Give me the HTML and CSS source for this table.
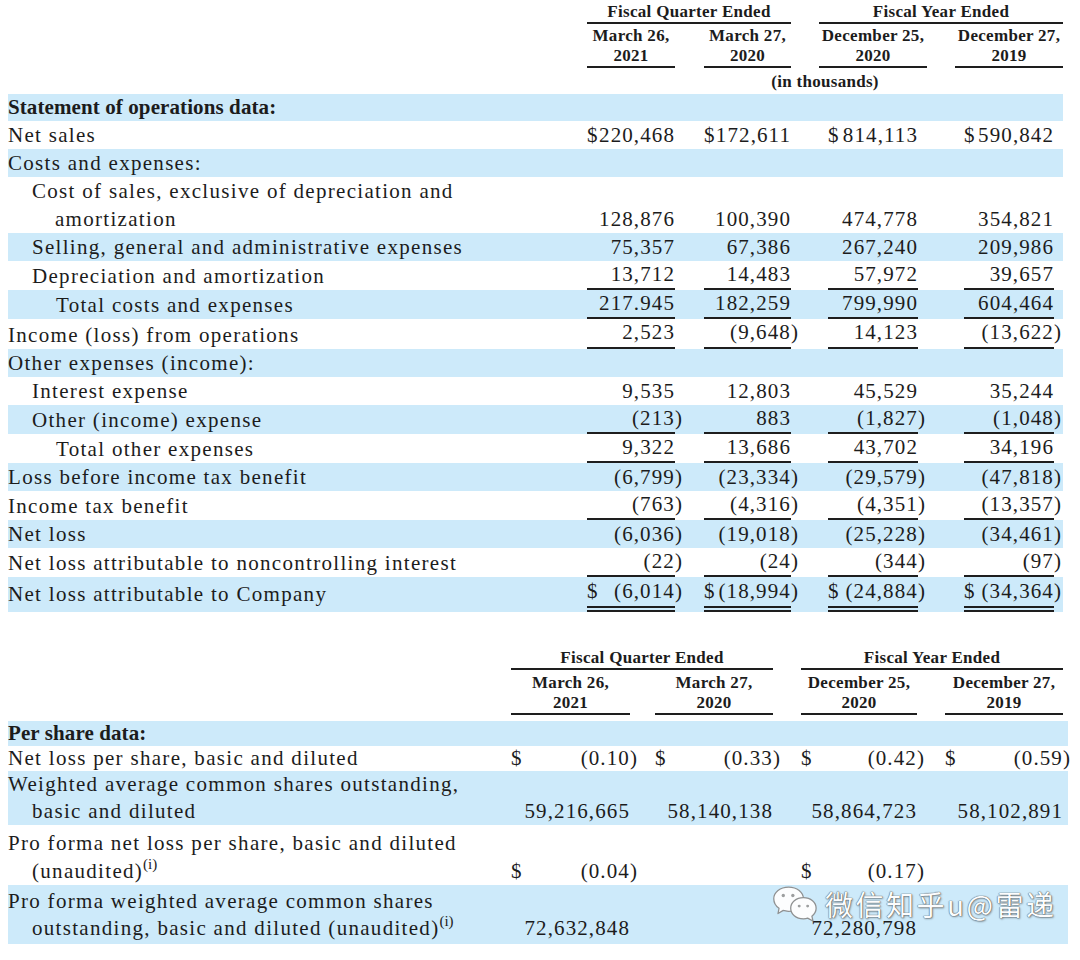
FILE: index.html
```html
<!DOCTYPE html>
<html lang="en">
<head>
<meta charset="utf-8">
<title>Selected financial data</title>
<link rel="stylesheet" href="styles.css">
</head>
<body>
<div class="page">
  <table class="fin t1">
    <colgroup><col class="cl"><col class="c1"><col class="c2"><col class="c3"><col class="c4"></colgroup>
    <thead>
      <tr class="hr1">
        <th></th>
        <th colspan="2" class="gq"><div class="hd">Fiscal Quarter Ended</div></th>
        <th colspan="2" class="gy"><div class="hd">Fiscal Year Ended</div></th>
      </tr>
      <tr class="hr2">
        <th></th>
        <th class="h1"><div class="hd">March 26,<br>2021</div></th>
        <th class="h2"><div class="hd">March 27,<br>2020</div></th>
        <th class="h3"><div class="hd">December 25,<br>2020</div></th>
        <th class="h4"><div class="hd">December 27,<br>2019</div></th>
      </tr>
      <tr class="hr3">
        <th></th>
        <th colspan="4">(in thousands)</th>
      </tr>
    </thead>
    <tbody>
      <tr class="first"><td class="lbl sec">Statement of operations data:</td><td></td><td class="v2"></td><td class="v3"></td><td class="v4"></td></tr>
      <tr><td class="lbl">Net sales</td>
        <td class="v1"><div class="n d"><span>$</span><span>220,468</span></div></td>
        <td class="v2"><div class="n d"><span>$</span><span>172,611</span></div></td>
        <td class="v3"><div class="n d"><span>$</span><span>814,113</span></div></td>
        <td class="v4"><div class="n d"><span>$</span><span>590,842</span></div></td></tr>
      <tr><td class="lbl">Costs and expenses:</td><td></td><td class="v2"></td><td class="v3"></td><td class="v4"></td></tr>
      <tr><td class="lbl w1">Cost of sales, exclusive of depreciation and<br>amortization</td>
        <td class="v1"><div class="n">128,876</div></td>
        <td class="v2"><div class="n">100,390</div></td>
        <td class="v3"><div class="n">474,778</div></td>
        <td class="v4"><div class="n">354,821</div></td></tr>
      <tr><td class="lbl i1">Selling, general and administrative expenses</td>
        <td class="v1"><div class="n">75,357</div></td>
        <td class="v2"><div class="n">67,386</div></td>
        <td class="v3"><div class="n">267,240</div></td>
        <td class="v4"><div class="n">209,986</div></td></tr>
      <tr><td class="lbl i1">Depreciation and amortization</td>
        <td class="v1"><div class="n u">13,712</div></td>
        <td class="v2"><div class="n u">14,483</div></td>
        <td class="v3"><div class="n u">57,972</div></td>
        <td class="v4"><div class="n u">39,657</div></td></tr>
      <tr><td class="lbl i2">Total costs and expenses</td>
        <td class="v1"><div class="n u">217.945</div></td>
        <td class="v2"><div class="n u">182,259</div></td>
        <td class="v3"><div class="n u">799,990</div></td>
        <td class="v4"><div class="n u">604,464</div></td></tr>
      <tr><td class="lbl">Income (loss) from operations</td>
        <td class="v1"><div class="n u">2,523</div></td>
        <td class="v2"><div class="n u">(9,648<span class="rp">)</span></div></td>
        <td class="v3"><div class="n u">14,123</div></td>
        <td class="v4"><div class="n u">(13,622<span class="rp">)</span></div></td></tr>
      <tr><td class="lbl">Other expenses (income):</td><td></td><td class="v2"></td><td class="v3"></td><td class="v4"></td></tr>
      <tr><td class="lbl i1">Interest expense</td>
        <td class="v1"><div class="n">9,535</div></td>
        <td class="v2"><div class="n">12,803</div></td>
        <td class="v3"><div class="n">45,529</div></td>
        <td class="v4"><div class="n">35,244</div></td></tr>
      <tr><td class="lbl i1">Other (income) expense</td>
        <td class="v1"><div class="n u">(213<span class="rp">)</span></div></td>
        <td class="v2"><div class="n u">883</div></td>
        <td class="v3"><div class="n u">(1,827<span class="rp">)</span></div></td>
        <td class="v4"><div class="n u">(1,048<span class="rp">)</span></div></td></tr>
      <tr><td class="lbl i2">Total other expenses</td>
        <td class="v1"><div class="n u">9,322</div></td>
        <td class="v2"><div class="n u">13,686</div></td>
        <td class="v3"><div class="n u">43,702</div></td>
        <td class="v4"><div class="n u">34,196</div></td></tr>
      <tr><td class="lbl">Loss before income tax benefit</td>
        <td class="v1"><div class="n">(6,799<span class="rp">)</span></div></td>
        <td class="v2"><div class="n">(23,334<span class="rp">)</span></div></td>
        <td class="v3"><div class="n">(29,579<span class="rp">)</span></div></td>
        <td class="v4"><div class="n">(47,818<span class="rp">)</span></div></td></tr>
      <tr><td class="lbl">Income tax benefit</td>
        <td class="v1"><div class="n u">(763<span class="rp">)</span></div></td>
        <td class="v2"><div class="n u">(4,316<span class="rp">)</span></div></td>
        <td class="v3"><div class="n u">(4,351<span class="rp">)</span></div></td>
        <td class="v4"><div class="n u">(13,357<span class="rp">)</span></div></td></tr>
      <tr><td class="lbl">Net loss</td>
        <td class="v1"><div class="n">(6,036<span class="rp">)</span></div></td>
        <td class="v2"><div class="n">(19,018<span class="rp">)</span></div></td>
        <td class="v3"><div class="n">(25,228<span class="rp">)</span></div></td>
        <td class="v4"><div class="n">(34,461<span class="rp">)</span></div></td></tr>
      <tr><td class="lbl">Net loss attributable to noncontrolling interest</td>
        <td class="v1"><div class="n u">(22<span class="rp">)</span></div></td>
        <td class="v2"><div class="n u">(24<span class="rp">)</span></div></td>
        <td class="v3"><div class="n u">(344<span class="rp">)</span></div></td>
        <td class="v4"><div class="n u">(97<span class="rp">)</span></div></td></tr>
      <tr class="last"><td class="lbl">Net loss attributable to Company</td>
        <td class="v1"><div class="n d dd"><span>$</span><span>(6,014<span class="rp">)</span></span></div></td>
        <td class="v2"><div class="n d dd"><span>$</span><span>(18,994<span class="rp">)</span></span></div></td>
        <td class="v3"><div class="n d dd"><span>$</span><span>(24,884<span class="rp">)</span></span></div></td>
        <td class="v4"><div class="n d dd"><span>$</span><span>(34,364<span class="rp">)</span></span></div></td></tr>
    </tbody>
  </table>

  <table class="fin t2">
    <colgroup><col class="cl"><col class="c1"><col class="c2"><col class="c3"><col class="c4"></colgroup>
    <thead>
      <tr class="hr1">
        <th></th>
        <th colspan="2" class="gq"><div class="hd">Fiscal Quarter Ended</div></th>
        <th colspan="2" class="gy"><div class="hd">Fiscal Year Ended</div></th>
      </tr>
      <tr class="hr2">
        <th></th>
        <th class="h1"><div class="hd">March 26,<br>2021</div></th>
        <th class="h2"><div class="hd">March 27,<br>2020</div></th>
        <th class="h3"><div class="hd">December 25,<br>2020</div></th>
        <th class="h4"><div class="hd">December 27,<br>2019</div></th>
      </tr>
    </thead>
    <tbody>
      <tr class="r1"><td class="lbl sec">Per share data:</td><td></td><td class="v2"></td><td class="v3"></td><td class="v4"></td></tr>
      <tr class="r2"><td class="lbl">Net loss per share, basic and diluted</td>
        <td class="v1"><div class="n d"><span>$</span><span>(0.10<span class="rp">)</span></span></div></td>
        <td class="v2"><div class="n d"><span>$</span><span>(0.33<span class="rp">)</span></span></div></td>
        <td class="v3"><div class="n d"><span>$</span><span>(0.42<span class="rp">)</span></span></div></td>
        <td class="v4"><div class="n d"><span>$</span><span>(0.59<span class="rp">)</span></span></div></td></tr>
      <tr class="r3"><td class="lbl w2">Weighted average common shares outstanding,<br>basic and diluted</td>
        <td class="v1"><div class="n">59,216,665</div></td>
        <td class="v2"><div class="n">58,140,138</div></td>
        <td class="v3"><div class="n">58,864,723</div></td>
        <td class="v4"><div class="n">58,102,891</div></td></tr>
      <tr class="r4"><td class="lbl w2">Pro forma net loss per share, basic and diluted<br>(unaudited)<sup>(i)</sup></td>
        <td class="v1"><div class="n d"><span>$</span><span>(0.04<span class="rp">)</span></span></div></td>
        <td class="v2"></td>
        <td class="v3"><div class="n d"><span>$</span><span>(0.17<span class="rp">)</span></span></div></td>
        <td class="v4"></td></tr>
      <tr class="r5"><td class="lbl w2">Pro forma weighted average common shares<br>outstanding, basic and diluted (unaudited)<sup>(i)</sup></td>
        <td class="v1"><div class="n">72,632,848</div></td>
        <td class="v2"></td>
        <td class="v3"><div class="n">72,280,798</div></td>
        <td class="v4"></td></tr>
    </tbody>
  </table>

  <div class="wm">
    <svg class="wx" width="48" height="36" viewBox="0 0 44 34" aria-hidden="true">
      <g fill="#ffffff" stroke="#8c8c8c" stroke-width="1.2" stroke-linejoin="round">
        <path d="M15 1 C7 1 1 6 1 12 C1 16 3 19 6 21 L5 26 L10 23 C12 23.5 13.5 24 15 24 C23 24 29 18.5 29 12 C29 6 23 1 15 1 Z"/>
        <path d="M29 11 C22 11 17 15.5 17 21 C17 26.5 22 31 29 31 C30.5 31 32 30.8 33 30.4 L38 33 L37 28.5 C39.5 26.5 41 24 41 21 C41 15.5 36 11 29 11 Z"/>
      </g>
      <g fill="#9a9a9a">
        <circle cx="10" cy="9" r="1.6"/><circle cx="19" cy="9" r="1.6"/>
        <circle cx="25" cy="19" r="1.4"/><circle cx="33" cy="19" r="1.4"/>
      </g>
    </svg>
    <span class="wt">微信知乎u@雷递</span>
  </div>
</div>
</body>
</html>
```

FILE: styles.css
```css
* { box-sizing: border-box; }

body {
  margin: 0;
  background: #ffffff;
  color: #1c1c1c;
  font-family: "Liberation Serif", "Times New Roman", serif;
}

.page {
  position: relative;
  width: 1080px;
  height: 960px;
  padding: 0 8px;
  overflow: hidden;
}

.fin {
  border-collapse: collapse;
  table-layout: fixed;
}

.fin td,
.fin th {
  padding: 0;
  vertical-align: bottom;
}

/* header cells */
.fin th {
  font-weight: bold;
  font-size: 17px;
  line-height: 20px;
  letter-spacing: 0.3px;
  text-align: center;
  white-space: nowrap;
}

.hd {
  border-bottom: 2px solid #1e1e1e;
}

.t1 .hr1 th { padding-top: 2px; }
.t1 .hr2 th { padding-top: 2px; }
.t1 .hr3 th { padding-top: 4px; padding-bottom: 2px; }

/* body cells */
.fin td {
  font-size: 21px;
  line-height: 28px;
  letter-spacing: 1.3px;
  white-space: nowrap;
}

.fin tbody tr:nth-child(odd) { background: #cdeafa; }

.fin .lbl { text-align: left; }
.fin .sec { font-weight: bold; letter-spacing: 0.1px; }
.fin .i1 { padding-left: 24px; }
.fin .i2 { padding-left: 48px; }
.fin .w1 { padding-left: 47px; text-indent: -23px; }
.fin .w2 { padding-left: 24px; text-indent: -24px; }

.n { text-align: right; letter-spacing: 1.1px; }
.d { display: flex; justify-content: space-between; }
.u { border-bottom: 2px solid #1e1e1e; line-height: 27.2px; }
.dd { border-bottom: 6px double #1e1e1e; line-height: 29px; }
.rp { margin-right: -8px; }
.t1 tr.last .lbl { padding-bottom: 4px; }

/* table 1 columns */
.t1 { width: 1055px; }
.t1 col.cl { width: 579px; }
.t1 col.c1 { width: 88px; }
.t1 col.c2 { width: 116px; }
.t1 col.c3 { width: 127px; }
.t1 col.c4 { width: 145px; }

.t1 .v2, .t1 .h2 { padding-left: 29px; }
.t1 .v3 { padding-left: 37px; }
.t1 .v4 { padding-left: 46px; padding-right: 9px; }
.t1 .h3 { padding-left: 28px; }
.t1 .h3 .hd { margin-right: -9px; }
.t1 .h4 { padding-left: 37px; }
.t1 .gy { padding-left: 28px; }
.t1 tr.first td { line-height: 27px; }

/* table 2 columns */
.t2 { width: 1060px; margin-top: 34px; }
.t2 col.cl { width: 503px; }
.t2 col.c1 { width: 119px; }
.t2 col.c2 { width: 143px; }
.t2 col.c3 { width: 144px; }
.t2 col.c4 { width: 151px; }

.t2 .v2, .t2 .h2 { padding-left: 25px; }
.t2 .v3, .t2 .h3 { padding-left: 28px; }
.t2 .v4, .t2 .h4 { padding-left: 28px; padding-right: 5px; }
.t2 .gy { padding-left: 28px; padding-right: 5px; }
.t2 .hr1 th { padding-top: 2px; }
.t2 .hr2 th { padding-top: 3px; padding-bottom: 6px; }

.t2 .r1 td { line-height: 25px; }
.t2 .r2 td { line-height: 25px; }
.t2 .r3 td { line-height: 27px; }
.t2 .r4 td { line-height: 28px; padding-top: 4px; }
.t2 .r5 td { line-height: 27px; padding-top: 3px; padding-bottom: 2px; }

sup {
  font-size: 15px;
  line-height: 0;
  vertical-align: 9px;
  letter-spacing: 0;
}

/* watermark overlay */
.wm {
  position: absolute;
  left: 772px;
  top: 886px;
  display: flex;
  align-items: center;
  gap: 5px;
  opacity: 0.94;
}

.wx { display: block; }

.wt {
  font-family: "Noto Sans CJK SC", "Noto Sans", sans-serif;
  font-size: 28px;
  line-height: 36px;
  letter-spacing: 2.5px;
  color: #ffffff;
  text-shadow: 0 0 1px #4a4a4a, 0 0 1px #4a4a4a, 1px 1px 2px rgba(0, 0, 0, 0.4);
}
```
